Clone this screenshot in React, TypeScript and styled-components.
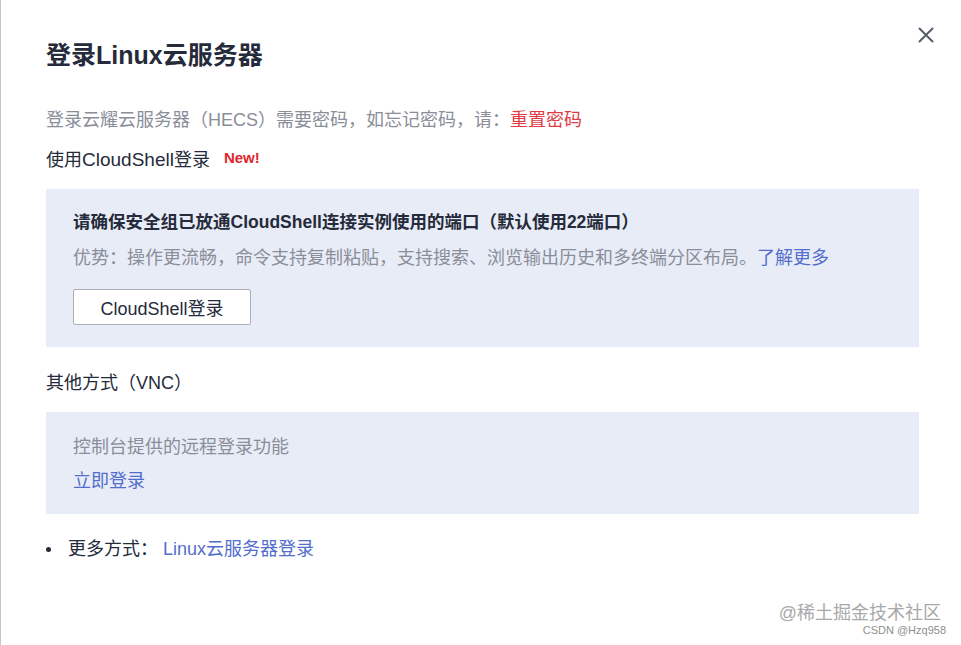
import React from 'react'
import styled, { createGlobalStyle } from 'styled-components'

const GlobalStyle = createGlobalStyle`
  html, body {
    margin: 0;
    padding: 0;
    background: #ffffff;
  }
  body {
    font-family: "Liberation Sans", "Noto Sans CJK SC", sans-serif;
    color: #252b3a;
  }
`

const Dialog = styled.div`
  position: relative;
  box-sizing: border-box;
  height: 645px;
  padding: 39px 42px 0 45px;
  border-left: 1px solid #c6c6c6;
  background: #fff;
  overflow: hidden;
`

const Title = styled.h2`
  margin: 0;
  font-size: 25px;
  line-height: 32px;
  font-weight: 700;
  color: #252b3a;
`

const CloseButton = styled.button`
  position: absolute;
  top: 26px;
  right: 26px;
  width: 18px;
  height: 18px;
  padding: 0;
  border: none;
  background: none;
  cursor: pointer;
  display: flex;
  align-items: center;
  justify-content: center;
`

const Hint = styled.p`
  margin: 36px 0 0;
  font-size: 18px;
  line-height: 26px;
  color: #8a8e99;
`

const Danger = styled.a`
  color: #de3b45;
  text-decoration: none;
`

const SectionLabel = styled.div<{ $gap: number }>`
  display: flex;
  align-items: center;
  margin-top: ${({ $gap }) => $gap}px;
  font-size: 18px;
  line-height: 26px;
  color: #252b3a;
`

const LatinWide = styled.span`
  font-size: 19px;
`

const NewTag = styled.span`
  margin-left: 14px;
  margin-top: -4px;
  font-size: 15px;
  font-weight: 700;
  color: #e0262d;
`

const Panel = styled.div<{ $top: number; $bottom: number }>`
  margin-top: 16px;
  padding: ${({ $top }) => $top}px 27px ${({ $bottom }) => $bottom}px;
  background: #e8ecf7;
`

const PanelTitle = styled.div`
  font-size: 17.5px;
  line-height: 26px;
  font-weight: 700;
  color: #252b3a;
`

const PanelText = styled.div<{ $gap?: number }>`
  margin-top: ${({ $gap }) => $gap ?? 0}px;
  font-size: 18px;
  line-height: 26px;
  color: #8a8e99;
`

const Link = styled.a`
  color: #526ecc;
  text-decoration: none;
  cursor: pointer;
`

const PanelLink = styled(Link)`
  display: block;
  margin-top: 8px;
  font-size: 18px;
  line-height: 26px;
`

const OutlineButton = styled.button`
  margin-top: 18px;
  width: 178px;
  height: 36px;
  padding: 0;
  border: 1px solid #adb0b8;
  border-radius: 2px;
  background: #fff;
  font-family: inherit;
  font-size: 18px;
  color: #252b3a;
  cursor: pointer;
`

const MoreRow = styled.div`
  display: flex;
  align-items: center;
  margin-top: 22px;
  font-size: 18px;
  line-height: 26px;
  color: #252b3a;
`

const Bullet = styled.span`
  width: 5px;
  height: 5px;
  margin: 1px 17px 0 0;
  border-radius: 50%;
  background: #252b3a;
`

const MoreLabel = styled.span`
  margin-right: 5px;
`

const Watermark = styled.div`
  position: absolute;
  right: 15px;
  bottom: 8px;
  display: flex;
  flex-direction: column;
  align-items: flex-end;
  pointer-events: none;
`

const WatermarkMain = styled.span`
  font-size: 18px;
  line-height: 22px;
  color: #a8a8a8;
  margin-right: 5px;
`

const WatermarkSub = styled.span`
  font-size: 11px;
  line-height: 13px;
  color: #8f8f8f;
`

export default function App() {
  return (
    <>
      <GlobalStyle />
      <Dialog>
        <Title>登录Linux云服务器</Title>
        <CloseButton aria-label='close'>
          <svg width='16' height='16' viewBox='0 0 16 16'>
            <path d='M1.5 1.5 L14.5 14.5 M14.5 1.5 L1.5 14.5' stroke='#575d6c' strokeWidth='2' strokeLinecap='round' />
          </svg>
        </CloseButton>

        <Hint>
          登录云耀云服务器（HECS）需要密码，如忘记密码，请：<Danger>重置密码</Danger>
        </Hint>

        <SectionLabel $gap={14}>
          使用<LatinWide>CloudShell</LatinWide>登录
          <NewTag>New!</NewTag>
        </SectionLabel>
        <Panel $top={20} $bottom={22}>
          <PanelTitle>请确保安全组已放通CloudShell连接实例使用的端口（默认使用22端口）</PanelTitle>
          <PanelText $gap={10}>
            优势：操作更流畅，命令支持复制粘贴，支持搜索、浏览输出历史和多终端分区布局。<Link>了解更多</Link>
          </PanelText>
          <OutlineButton>CloudShell登录</OutlineButton>
        </Panel>

        <SectionLabel $gap={23}>其他方式（VNC）</SectionLabel>
        <Panel $top={22} $bottom={20}>
          <PanelText>控制台提供的远程登录功能</PanelText>
          <PanelLink>立即登录</PanelLink>
        </Panel>

        <MoreRow>
          <Bullet />
          <MoreLabel>更多方式：</MoreLabel>
          <Link>Linux云服务器登录</Link>
        </MoreRow>

        <Watermark>
          <WatermarkMain>@稀土掘金技术社区</WatermarkMain>
          <WatermarkSub>CSDN @Hzq958</WatermarkSub>
        </Watermark>
      </Dialog>
    </>
  )
}
